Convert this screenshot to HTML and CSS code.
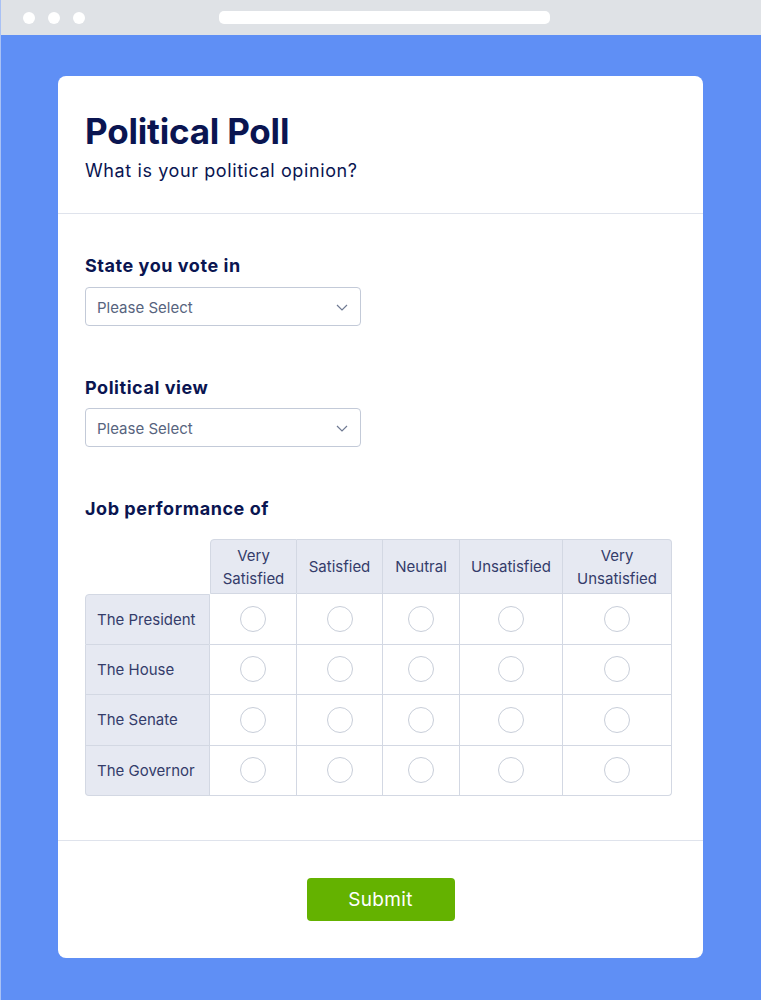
FILE: index.html
```html
<!DOCTYPE html>
<html lang="en">
<head>
  <meta charset="UTF-8">
  <title>Political Poll</title>
  <link rel="stylesheet" href="styles.css">
</head>
<body>

  <div class="chrome">
    <span class="dot"></span>
    <span class="dot"></span>
    <span class="dot"></span>
    <span class="address"></span>
  </div>

  <div class="page">
    <div class="card">
      <div class="card-header">
        <h1>Political Poll</h1>
        <p class="subtitle">What is your political opinion?</p>
      </div>

      <form class="card-body">
        <div class="field">
          <label class="field-label">State you vote in</label>
          <div class="select">
            <span>Please Select</span>
            <svg width="12" height="7" viewBox="0 0 12 7"><path d="M1 1l5 5 5-5" fill="none" stroke="#6f7a93" stroke-width="1.2"/></svg>
          </div>
        </div>

        <div class="field">
          <label class="field-label">Political view</label>
          <div class="select">
            <span>Please Select</span>
            <svg width="12" height="7" viewBox="0 0 12 7"><path d="M1 1l5 5 5-5" fill="none" stroke="#6f7a93" stroke-width="1.2"/></svg>
          </div>
        </div>

        <div class="field">
          <label class="field-label">Job performance of</label>
          <table class="matrix">
            <thead>
              <tr>
                <th class="blank"></th>
                <th class="col c1">Very<br>Satisfied</th>
                <th class="col c2">Satisfied</th>
                <th class="col c3">Neutral</th>
                <th class="col c4">Unsatisfied</th>
                <th class="col c5 last">Very<br>Unsatisfied</th>
              </tr>
            </thead>
            <tbody>
              <tr class="first">
                <th class="row">The President</th>
                <td><span class="radio"></span></td>
                <td><span class="radio"></span></td>
                <td><span class="radio"></span></td>
                <td><span class="radio"></span></td>
                <td><span class="radio"></span></td>
              </tr>
              <tr>
                <th class="row">The House</th>
                <td><span class="radio"></span></td>
                <td><span class="radio"></span></td>
                <td><span class="radio"></span></td>
                <td><span class="radio"></span></td>
                <td><span class="radio"></span></td>
              </tr>
              <tr>
                <th class="row">The Senate</th>
                <td><span class="radio"></span></td>
                <td><span class="radio"></span></td>
                <td><span class="radio"></span></td>
                <td><span class="radio"></span></td>
                <td><span class="radio"></span></td>
              </tr>
              <tr class="last-row">
                <th class="row">The Governor</th>
                <td><span class="radio"></span></td>
                <td><span class="radio"></span></td>
                <td><span class="radio"></span></td>
                <td><span class="radio"></span></td>
                <td><span class="radio"></span></td>
              </tr>
            </tbody>
          </table>
        </div>
      </form>

      <div class="card-footer">
        <button type="button" class="submit">Submit</button>
      </div>
    </div>
  </div>

</body>
</html>
```

FILE: styles.css
```css
* {
  box-sizing: border-box;
}

body {
  margin: 0;
  padding: 0;
  background-color: #5f8ff5;
  font-family: 'Inter', 'Noto Sans', sans-serif;
  color: #0a1551;
  border-left: 1px solid #a9c1f5;
}

.chrome {
  height: 35px;
  background-color: #dfe2e6;
  display: flex;
  align-items: center;
  padding-left: 22px;
}

.dot {
  width: 12px;
  height: 12px;
  border-radius: 50%;
  background: #fff;
  margin-right: 13px;
}

.address {
  width: 331px;
  height: 13px;
  border-radius: 5px;
  background: #fff;
  margin-left: 121px;
}

.page {
  padding: 41px 58px 42px 57px;
}

.card {
  background: #fff;
  border-radius: 8px;
  height: 882px;
  display: flex;
  flex-direction: column;
}

.card-header {
  padding: 33px 27px 0;
  height: 138px;
  border-bottom: 1px solid #dfe3ec;
}

h1 {
  margin: 0;
  font-size: 35px;
  font-weight: 700;
  line-height: 44px;
  letter-spacing: -0.2px;
}

.subtitle {
  margin: 6px 0 0;
  font-size: 18px;
  line-height: 24px;
  letter-spacing: 0.6px;
}

.card-body {
  padding: 40px 27px 0;
  height: 627px;
  border-bottom: 1px solid #dfe3ec;
}

.field {
  margin-bottom: 50px;
}

.field-label {
  display: block;
  font-size: 18px;
  font-weight: 700;
  line-height: 24px;
  letter-spacing: 0.55px;
  margin-bottom: 9px;
}

.field + .field .field-label {
  margin-bottom: 8px;
}

.select {
  width: 276px;
  height: 39px;
  border: 1px solid #c3cad8;
  border-radius: 4px;
  display: flex;
  align-items: center;
  justify-content: space-between;
  padding: 1px 12px 0 11px;
  font-size: 15px;
  color: #57647e;
}

.matrix {
  border-collapse: separate;
  border-spacing: 0;
  margin-top: 18px;
  font-size: 15px;
  color: #343c6a;
}

.matrix th,
.matrix td {
  border-right: 1px solid #d3d8e3;
  border-bottom: 1px solid #d3d8e3;
  text-align: center;
  font-weight: 400;
  padding: 0;
}

.matrix .blank {
  border: none;
  width: 125px;
}

.matrix .col {
  background: #e6e9f2;
  height: 55px;
  line-height: 23px;
  border-top: 1px solid #d3d8e3;
}

.matrix .c1 { width: 87px; border-left: 1px solid #d3d8e3; border-top-left-radius: 4px; }
.matrix .c2 { width: 86px; }
.matrix .c3 { width: 77px; }
.matrix .c4 { width: 103px; }
.matrix .c5 { width: 109px; border-top-right-radius: 4px; }

.matrix .row {
  background: #e6e9f2;
  text-align: left;
  padding-left: 11px;
  height: 50.5px;
  border-left: 1px solid #d3d8e3;
}

.matrix .first .row {
  border-top: 1px solid #d3d8e3;
  border-top-left-radius: 4px;
}

.matrix .last-row .row {
  border-bottom-left-radius: 4px;
}

.matrix .last-row td:last-child {
  border-bottom-right-radius: 4px;
}

.radio {
  display: inline-block;
  width: 26px;
  height: 26px;
  border: 1px solid #c8ced9;
  border-radius: 50%;
  vertical-align: middle;
}

.card-footer {
  flex: 1;
  display: flex;
  justify-content: center;
  padding-top: 37px;
}

.submit {
  width: 148px;
  height: 43px;
  background-color: #64b200;
  color: #fff;
  border: none;
  border-radius: 4px;
  font-family: inherit;
  font-size: 19px;
  letter-spacing: 0.3px;
  cursor: pointer;
}
```
